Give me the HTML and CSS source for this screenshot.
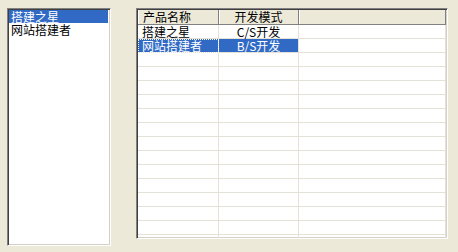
FILE: index.html
```html
<!DOCTYPE html>
<html lang="zh-CN">
<head>
    <meta charset="UTF-8">
    <title>产品列表</title>
    <link rel="stylesheet" href="styles.css">
</head>
<body>

    <div class="form">
        <div class="listbox">
            <div class="item selected">搭建之星</div>
            <div class="item">网站搭建者</div>
        </div>

        <div class="grid">
            <table>
                <thead>
                    <tr>
                        <th class="col-name">产品名称</th>
                        <th class="col-mode">开发模式</th>
                        <th class="col-rest"></th>
                    </tr>
                </thead>
                <tbody>
                    <tr>
                        <td class="name">搭建之星</td>
                        <td class="mode">C/S开发</td>
                        <td></td>
                    </tr>
                    <tr class="selected">
                        <td class="name">网站搭建者</td>
                        <td class="mode">B/S开发</td>
                        <td></td>
                    </tr>
                    <tr><td></td><td></td><td></td></tr>
                    <tr><td></td><td></td><td></td></tr>
                    <tr><td></td><td></td><td></td></tr>
                    <tr><td></td><td></td><td></td></tr>
                    <tr><td></td><td></td><td></td></tr>
                    <tr><td></td><td></td><td></td></tr>
                    <tr><td></td><td></td><td></td></tr>
                    <tr><td></td><td></td><td></td></tr>
                    <tr><td></td><td></td><td></td></tr>
                    <tr><td></td><td></td><td></td></tr>
                    <tr><td></td><td></td><td></td></tr>
                    <tr><td></td><td></td><td></td></tr>
                    <tr><td></td><td></td><td></td></tr>
                    <tr><td></td><td></td><td></td></tr>
                </tbody>
            </table>
        </div>
    </div>

</body>
</html>
```

FILE: styles.css
```css
body {
    margin: 0;
    background-color: #ece9d8;
    font-family: "Noto Sans CJK SC", sans-serif;
    font-size: 12px;
    color: #000;
}

.form {
    display: flex;
    align-items: flex-start;
    padding: 8px 0 0 7px;
    gap: 25px;
}

/* sunken 3D frame like the old controls */
.listbox,
.grid {
    box-sizing: border-box;
    background-color: #fff;
    border-top: 1px solid #808080;
    border-left: 1px solid #808080;
    border-right: 1px solid #fff;
    border-bottom: 1px solid #fff;
    box-shadow: inset 1px 1px 0 #404040, inset -1px -1px 0 #d4d0c8;
}

.listbox {
    width: 104px;
    height: 238px;
    padding: 1px 2px 0 1px;
}

.item {
    height: 13px;
    line-height: 13px;
    padding-left: 2px;
    white-space: nowrap;
}

.item.selected {
    background-color: #316ac5;
    color: #fff;
}

.grid {
    width: 312px;
    height: 231px;
    padding: 1px 0 0 1px;
    overflow: hidden;
}

table {
    border-collapse: separate;
    border-spacing: 0;
    table-layout: fixed;
    width: 308px;
}

th,
td {
    box-sizing: border-box;
    padding: 0;
    white-space: nowrap;
}

th {
    height: 15px;
    background-color: #ece9d8;
    font-weight: normal;
    line-height: 14px;
    border-right: 1px solid #808080;
    border-bottom: 1px solid #808080;
    box-shadow: inset 1px 0 0 #fff;
}

.col-name {
    width: 81px;
    text-align: left;
    padding-left: 5px;
}

.col-mode {
    width: 80px;
    text-align: center;
}

td {
    height: 14px;
    line-height: 13px;
    border-right: 1px solid #e4e2d6;
    border-bottom: 1px solid #e4e2d6;
}

td.name {
    padding-left: 4px;
}

td.mode {
    text-align: center;
}

tr.selected td.name,
tr.selected td.mode {
    background-color: #316ac5;
    color: #fff;
}

tr.selected td.name {
    outline: 1px dotted #fff;
    outline-offset: -1px;
}
```
